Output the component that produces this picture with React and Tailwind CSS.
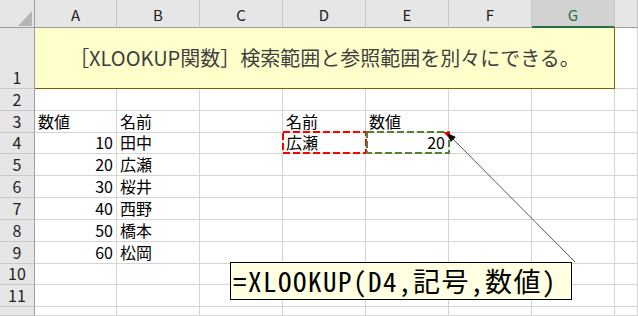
export default function App() {
  const cols = ["A", "B", "C", "D", "E", "F", "G", "H"];
  const data = {
    A3: ["数値", "l"], B3: ["名前", "l"], D3: ["名前", "l"], E3: ["数値", "l"],
    A4: ["10", "r"], B4: ["田中", "l"], D4: ["広瀬", "l"], E4: ["20", "r"],
    A5: ["20", "r"], B5: ["広瀬", "l"],
    A6: ["30", "r"], B6: ["桜井", "l"],
    A7: ["40", "r"], B7: ["西野", "l"],
    A8: ["50", "r"], B8: ["橋本", "l"],
    A9: ["60", "r"], B9: ["松岡", "l"],
  };
  const rows = [2, 3, 4, 5, 6, 7, 8, 9, 10, 11, 12];

  return (
    <div className="relative w-[638px] h-[316px] overflow-hidden bg-white font-['Noto_Sans_CJK_JP','Noto_Sans',sans-serif] text-black">
      <div className="grid w-[638px] h-[316px] grid-cols-[35px_82px_83px_83px_83px_83px_83px_83px_1fr] grid-rows-[28px_61px_22px_22px_21px_22px_22px_22px_22px_22px_21px_22px_1fr]">
        {/* header row */}
        <div className="relative bg-[#e6e6e6] border-r border-b border-[#9e9e9e]">
          <svg className="absolute left-0 top-0" width="35" height="28">
            <polygon points="18,26 32,26 32,11" fill="#b5b5b5" />
          </svg>
        </div>
        {cols.map((c) =>
          c === "G" ? (
            <div key={c} className="bg-[#d2d2d2] border-r border-[#c6c6c6] border-b-2 border-b-[#217346] flex items-end justify-center pb-[1px] text-[15px] leading-[20px] text-[#217346]">
              {c}
            </div>
          ) : (
            <div key={c} className="bg-[#e6e6e6] border-r border-b border-r-[#c6c6c6] border-b-[#9e9e9e] flex items-end justify-center pb-[2px] text-[15px] leading-[20px] text-[#222]">
              {c === "H" ? "" : c}
            </div>
          )
        )}

        {/* row 1 */}
        <div className="bg-[#e6e6e6] border-r border-b border-r-[#9e9e9e] border-b-[#c8c8c8] flex items-end justify-center pb-[1px] text-[16px] leading-[20px] text-[#222]">
          1
        </div>
        <div className="col-span-7 bg-[#ffffcc] border-r border-b border-[#7f6000] flex items-center justify-center text-[20px] leading-[26px] text-[#3f3f3f]">
          ［XLOOKUP関数］検索範囲と参照範囲を別々にできる。
        </div>
        <div className="border-r border-b border-[#d4d4d4]" />

        {rows.map((r) => (
          <RowCells key={r} r={r} cols={cols} data={data} />
        ))}
      </div>

      {/* overlays */}
      <svg className="absolute left-0 top-0 pointer-events-none" width="638" height="316">
        <rect x="283" y="132" width="83" height="21" fill="none" stroke="#ff0000" strokeWidth="2" strokeDasharray="7 3" />
        <rect x="367" y="132" width="82" height="21" fill="none" stroke="#548235" strokeWidth="2" strokeDasharray="7 3" />
        <polygon points="443,132 450,132 450,139" fill="#ff0000" />
        <line x1="452" y1="138" x2="575" y2="262" stroke="#595959" strokeWidth="1" />
        <polygon points="447,133 450.8,141.9 455.8,136.9" fill="#000" />
      </svg>

      <div className="absolute left-[230px] top-[262px] w-[342px] h-[38px] bg-[#ffffe1] border border-black flex items-center pl-[2px] font-['Noto_Sans_Mono_CJK_JP','Noto_Sans_CJK_JP',monospace] font-normal text-[27px] leading-[34px] tracking-[1.5px] whitespace-nowrap">
        =XLOOKUP(D4,記号,数値)
      </div>
    </div>
  );
}

function RowCells({ r, cols, data }) {
  return (
    <>
      <div className="bg-[#e6e6e6] border-r border-b border-r-[#9e9e9e] border-b-[#c8c8c8] flex items-end justify-center pb-[1px] text-[16px] leading-[20px] text-[#222] overflow-hidden">
        {r === 12 ? "" : r}
      </div>
      {cols.map((c) => {
        const d = data[c + r];
        return (
          <div
            key={c}
            className={
              "border-r border-b border-[#d4d4d4] flex items-end px-[3px] pb-[1px] text-[16px] leading-[20px] overflow-hidden whitespace-nowrap " +
              (d && d[1] === "r" ? "justify-end" : "justify-start")
            }
          >
            {d ? d[0] : ""}
          </div>
        );
      })}
    </>
  );
}
